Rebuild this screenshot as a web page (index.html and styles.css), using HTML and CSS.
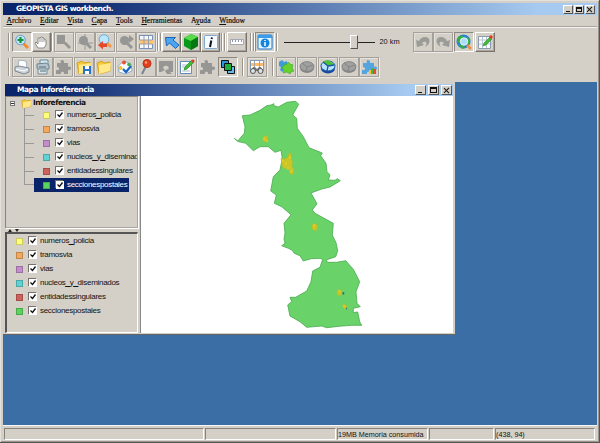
FILE: index.html
```html
<!DOCTYPE html>
<html lang="es">
<head>
<meta charset="utf-8">
<title>GEOPISTA GIS workbench.</title>
<link rel="stylesheet" href="styles.css">
</head>
<body>
<svg class="defs" aria-hidden="true">
  <defs>
    <symbol id="lens" viewBox="0 0 16 16"><path d="M9 9l5 5" stroke="currentColor" stroke-width="3"/><circle cx="6.5" cy="6.5" r="4.5" fill="currentColor"/></symbol>
    <symbol id="puzzle" viewBox="0 0 16 16"><path fill="currentColor" d="M2 4h4c-2-4 4-4 3 0h4v4c4-2 4 4 0 3v4H9c1-3-4-3-3 0H1v-4c4 1 4-3 1-3z"/></symbol>
    <symbol id="disc" viewBox="0 0 16 16"><ellipse cx="8" cy="9" rx="7" ry="5" fill="#858585"/><ellipse cx="8" cy="7.5" rx="7" ry="4.8" fill="#a0a0a0" stroke="#858585"/><path d="M8 8L3 4M8 8l6-2M8 8l-1 4" stroke="#858585"/></symbol>
    <symbol id="folder" viewBox="0 0 16 16"><path d="M1 4l5-2 2 2 6-1v9L3 15z" fill="#f4c83c" stroke="#d9a21f"/><path d="M3 6l12-2-1 8-11 3z" fill="#ffe98a"/></symbol>
    <symbol id="sheet" viewBox="0 0 16 16"><path d="M1.500 2.500h12v12h-12z" fill="#fff" stroke="#8b9bb0"/><path d="M2 6h11M2 10h11M5.500 3v11M9.500 3v11" stroke="#b5c2d2"/><path d="M6 12l1-3 6-6 2 2-6 6z" fill="#43bb36" stroke="#278f22" stroke-width=".6"/><circle cx="14" cy="3" r="1.700" fill="#e23a22"/></symbol>
    <symbol id="undo" viewBox="0 0 16 16"><path d="M1 6l1 7 7-2-2-2c4-3 6 0 3 4 6-3 6-10 0-10-3 0-5 2-6 4z" fill="#9b9b98"/></symbol>
    <symbol id="tick" viewBox="0 0 8 8"><path d="M1.500 3.500l2 2 3-4" fill="none" stroke="#111" stroke-width="1.300"/></symbol>
  </defs>
</svg>

<div class="window">
  <header class="titlebar main-title">
    <h1 class="title">GEOPISTA GIS workbench.</h1>
    <div class="controls"><i class="ctl min"></i><i class="ctl max"></i><i class="ctl close"></i></div>
  </header>

  <nav class="menu">
    <span><u>A</u>rchivo</span><span><u>E</u>ditar</span><span><u>V</u>ista</span><span><u>C</u>apa</span><span><u>T</u>ools</span><span><u>H</u>erramientas</span><span>A<u>y</u>uda</span><span><u>W</u>indow</span>
  </nav>

  <div class="toolbar first">
    <i class="grip"></i>
    <div class="group zooming">
      <b class="btn on"><svg viewBox="0 0 16 16"><path d="M9 9l5 5" stroke="#f08b35" stroke-width="3"/><circle cx="6.500" cy="6" r="4.800" fill="#bfe5fb" stroke="#6c9dc4"/><path d="M6.500 3v6M3.500 6h6" stroke="#17943a" stroke-width="2.200"/></svg></b>
      <b class="btn up"><svg viewBox="0 0 16 16"><path d="M5 14L2 9l1-1 2 2V4h2l1-1h1l1 1h1v1l2 1v5l-2 3z" fill="#fff" stroke="#8a8a88"/><path d="M7 4v4M9 4v4M11 5v3" stroke="#999"/></svg></b>
    </div>
    <i class="grip"></i>
    <div class="group views">
      <b class="btn off"><svg viewBox="0 0 16 16"><path d="M1 1h8v7h1l5 5-2 2-5-5H1z" fill="currentColor"/></svg></b>
      <b class="btn off"><svg viewBox="0 0 16 16"><use href="#lens"/><path d="M8 0v16M1 9h15" stroke="currentColor"/></svg></b>
      <b class="btn"><svg viewBox="0 0 16 16"><path d="M9 8l5 5" stroke="#f29a4a" stroke-width="3"/><circle cx="7" cy="5.500" r="4.800" fill="#bce6fb" stroke="#6aa9d5"/><path d="M1 11l5-4v2.500h4v3.500H6v2.500z" fill="#e8482a"/></svg></b>
      <b class="btn off"><svg viewBox="0 0 16 16"><use href="#lens"/><path d="M8 4h3V1l5 4-5 4V7H8z" fill="currentColor"/></svg></b>
      <b class="btn"><svg viewBox="0 0 16 16"><path d="M1.500 1.500h13v13h-13z" fill="#f4f7fb" stroke="#7392bd"/><path d="M1 6h14v4H1z" fill="#ffc46b"/><path d="M2 6h12M2 10h12M6 2v12M10.500 2v12" stroke="#9a9ea9"/></svg></b>
    </div>
    <i class="grip double"></i>
    <div class="group tools">
      <b class="btn up"><svg viewBox="0 0 16 16"><path d="M1.500 3.500h10l-2.500 2.500 6 5-3.500 3.500-6-5.500-3 3z" fill="#4aa5f2" stroke="#1765bd"/></svg></b>
      <b class="btn up"><svg viewBox="0 0 16 16"><path d="M1 4l7-4 7 3v9l-7 4-7-4z" fill="#0b971a"/><path d="M1 4l7-4 7 3-7 4z" fill="#59dc4b"/><path d="M8 7l7-4v9l-7 4z" fill="#067811"/></svg></b>
      <b class="btn up"><svg viewBox="0 0 16 16"><rect x="1.500" y="1.500" width="13" height="13" rx="1" fill="#f4faff" stroke="#7fa9d0"/><path d="M9 3.500l-.5 1.500M8.300 6.500L7 13" stroke="#111" stroke-width="2"/></svg></b>
    </div>
    <i class="grip double"></i>
    <b class="btn up ruler"><svg viewBox="0 0 16 16"><path d="M1.500 5.500h13v5h-13z" fill="#fff" stroke="#a5a9b2"/><path d="M3.500 6v2M6.500 6v2M9.500 6v2M12.500 6v2" stroke="#8d94a5"/></svg></b>
    <i class="grip double"></i>
    <b class="btn on info"><svg viewBox="0 0 16 16"><rect x="1" y="1" width="14" height="14" rx="1" fill="#e5f4ff" stroke="#1c79cc"/><path d="M1 1h14v3H1z" fill="#3a9dec"/><circle cx="8" cy="9" r="4.500" fill="#1684dc"/><path d="M8 6v1M8 8v4" stroke="#fff" stroke-width="1.500"/></svg></b>
    <i class="grip"></i>
    <div class="scale"><div class="slider"><i class="thumb"></i></div><span>20 km</span></div>
    <div class="group history">
      <b class="btn off"><svg viewBox="0 0 16 16"><use href="#undo"/></svg></b>
      <b class="btn off"><svg class="flip" viewBox="0 0 16 16"><use href="#undo"/></svg></b>
      <b class="btn on"><svg viewBox="0 0 16 16"><circle cx="7.500" cy="7.500" r="7" fill="#2a82d6"/><path d="M2 3l4-2 2 3-3 4-4 1zM11 2l3 4-1 5-3-3zM3 11l4-1 2 4-3 1z" fill="#35ad43"/><circle cx="8" cy="7.500" r="3.700" fill="#a9def7" stroke="#e7f8ff"/><path d="M11 11l4 4" stroke="#f28b3e" stroke-width="2.500"/></svg></b>
      <b class="btn up"><svg viewBox="0 0 16 16"><use href="#sheet"/></svg></b>
    </div>
  </div>

  <div class="toolbar second">
    <i class="grip"></i>
    <div class="group files">
      <b class="btn"><svg viewBox="0 0 16 16"><path d="M4 8l1-7 7 1 1 7z" fill="#fff" stroke="#a4b2c1"/><path d="M1 8l4-1 10 2v4l-5 2-9-3z" fill="#cbd3d8" stroke="#7f8b93"/><path d="M2 10l8 2 4-2" fill="none" stroke="#fff"/></svg></b>
      <b class="btn"><svg viewBox="0 0 16 16"><path d="M5 1h8v5H5z" fill="#d9e8ef" stroke="#698c9b"/><path d="M2 5l9-1 3 2v4l-9 1-3-2z" fill="#b5c4cc" stroke="#6c8390"/><path d="M3 10h9v5H3z" fill="#dce4e8" stroke="#788c98"/><path d="M4 8h7M5 12h6" stroke="#4e707f"/></svg></b>
      <b class="btn off"><svg viewBox="0 0 16 16"><use href="#puzzle"/></svg></b>
      <b class="btn"><svg viewBox="0 0 16 16"><use href="#folder"/><path d="M7 7h8v8H7z" fill="#2c72cb"/><path d="M9 7h4v3H9zM9 12h4v3H9z" fill="#fff"/></svg></b>
      <b class="btn"><svg viewBox="0 0 16 16"><use href="#folder"/></svg></b>
      <b class="btn"><svg viewBox="0 0 16 16"><path d="M1 7l6-5 7 3 1 7-7 3-6-2z" fill="#f5faff" stroke="#90add0"/><circle cx="7" cy="3.500" r="2" fill="#e6562e"/><circle cx="3.500" cy="9" r="2" fill="#f5bd30"/><circle cx="12" cy="5.500" r="1.800" fill="#43ad43"/><path d="M6 10l3 3 5-6" fill="none" stroke="#1b63bc" stroke-width="2.200"/></svg></b>
      <b class="btn"><svg viewBox="0 0 16 16"><path d="M8 7l-4 8" stroke="#758492" stroke-width="2"/><circle cx="9" cy="4.500" r="4" fill="#e23f20" stroke="#b92e15"/><circle cx="8" cy="3.500" r="1.200" fill="#ff9f82"/></svg></b>
      <b class="btn off"><svg viewBox="0 0 16 16"><path d="M1 2h14v11h-3l2 2H9l-2-3 2-2 1 1c3-4-4-6-5-2l2 2-4 2H1z" fill="currentColor"/></svg></b>
      <b class="btn"><svg viewBox="0 0 16 16"><path d="M1.500 2.500h11v12h-11z" fill="#fff" stroke="#638cb9"/><path d="M3 6h5M3 8h4M3 12h8" stroke="#a7bad0"/><path d="M5 11l1-3 7-7 2 2-7 7z" fill="#43bd39" stroke="#218d21" stroke-width=".7"/><circle cx="14" cy="2" r="1.500" fill="#e13d25"/></svg></b>
      <b class="btn off flat"><svg viewBox="0 0 16 16"><use href="#puzzle"/></svg></b>
      <b class="btn on"><svg viewBox="0 0 16 16"><path d="M1.500 1.500h7v7h-7z" fill="#3090d8" stroke="#111"/><path d="M7.500 7.500h7v7h-7z" fill="#68b9ef" stroke="#111"/><path d="M4.500 4.500h7v7h-7z" fill="#20ae3b" stroke="#111"/></svg></b>
    </div>
    <i class="grip"></i>
    <b class="btn find"><svg viewBox="0 0 16 16"><path d="M1.500 1.500h13v10h-13z" fill="#fff" stroke="#8498b2"/><path d="M2 4h12v3H2z" fill="#ffb968"/><path d="M5.500 2v8M10.500 2v8" stroke="#9ea4ab"/><path d="M2 12l2-4h2l2 2 2-2h2l2 4" fill="#777"/><circle cx="4" cy="12" r="2.500" fill="#d8e1e7" stroke="#555"/><circle cx="11.500" cy="12" r="2.500" fill="#d8e1e7" stroke="#555"/></svg></b>
    <i class="grip"></i>
    <div class="group plugins">
      <b class="btn"><svg viewBox="0 0 16 16"><path d="M1 3l3-2 2 2 3-1v4l2 1-2 2v3l-3-1-2 2-2-2 1-3-2-1z" fill="#3e9dd9"/><path d="M6 6l3-1 1-2 2 2 3 1-1 3 2 3-3 1-1 2-3-2-4 1 1-3-2-2z" fill="#67d12e" stroke="#36a322" stroke-width=".6"/></svg></b>
      <b class="btn off"><svg viewBox="0 0 16 16"><use href="#disc"/></svg></b>
      <b class="btn"><svg viewBox="0 0 16 16"><ellipse cx="8" cy="9.500" rx="7" ry="5" fill="#174a9c"/><ellipse cx="8" cy="7" rx="7" ry="5" fill="#b9e3fa" stroke="#1857ad"/><path d="M8 7L3 3c3-3 9-1 11 3z" fill="#4bc42e"/><path d="M8 7L3 3M8 7l6-1M8 7l-1 5" stroke="#1756ab" stroke-width="1.300"/></svg></b>
      <b class="btn off"><svg viewBox="0 0 16 16"><use href="#disc"/></svg></b>
      <b class="btn"><svg class="blue" viewBox="0 0 16 16"><use href="#puzzle"/><path d="M8 15v-4h2v4z" fill="#f7c332"/><path d="M10 15V9h2v6z" fill="#44b843"/><path d="M12 15v-5h3v5z" fill="#ea4c2b"/></svg></b>
    </div>
  </div>

  <main class="desktop">
    <section class="frame">
      <header class="titlebar frame-title">
        <h2 class="title">Mapa Inforeferencia</h2>
        <div class="controls"><i class="ctl min"></i><i class="ctl max"></i><i class="ctl close"></i></div>
      </header>
      <div class="content">
        <aside class="side">
          <div class="tree">
            <div class="root"><i class="expander"></i><svg class="folder-icon" viewBox="0 0 16 16"><use href="#folder"/></svg><b>Inforeferencia</b></div>
            <ul class="layers">
              <li><i class="swatch yellow"></i><svg class="check"><use href="#tick"/></svg><span>numeros<span class="low">_</span>policia</span></li>
              <li><i class="swatch orange"></i><svg class="check"><use href="#tick"/></svg><span>tramosvia</span></li>
              <li><i class="swatch purple"></i><svg class="check"><use href="#tick"/></svg><span>vias</span></li>
              <li><i class="swatch cyan"></i><svg class="check"><use href="#tick"/></svg><span>nucleos<span class="low">_</span>y<span class="low">_</span>diseminad</span></li>
              <li><i class="swatch red"></i><svg class="check"><use href="#tick"/></svg><span>entidadessingulares</span></li>
              <li class="selected"><i class="swatch green"></i><svg class="check"><use href="#tick"/></svg><span>seccionespostales</span></li>
            </ul>
          </div>
          <div class="divider"><i class="arrow up-arrow"></i><i class="arrow down-arrow"></i></div>
          <ul class="layers legend">
            <li><i class="swatch yellow"></i><svg class="check"><use href="#tick"/></svg><span>numeros<span class="low">_</span>policia</span></li>
            <li><i class="swatch orange"></i><svg class="check"><use href="#tick"/></svg><span>tramosvia</span></li>
            <li><i class="swatch purple"></i><svg class="check"><use href="#tick"/></svg><span>vias</span></li>
            <li><i class="swatch cyan"></i><svg class="check"><use href="#tick"/></svg><span>nucleos<span class="low">_</span>y<span class="low">_</span>diseminados</span></li>
            <li><i class="swatch red"></i><svg class="check"><use href="#tick"/></svg><span>entidadessingulares</span></li>
            <li><i class="swatch green"></i><svg class="check"><use href="#tick"/></svg><span>seccionespostales</span></li>
          </ul>
        </aside>
        <svg class="map" viewBox="141 96 312 237">
          <path class="land" d="M234.300 138.300L237.700 141 244.300 133.300 245 126.700 242.300 115.700 250 115 260 110.300 266.700 105.700 271 105 274 103.700 273.500 105.500 278.300 107 286.700 102.300 295.700 101.300 298.700 104.300 292.700 115 296.700 118.300 297.300 128.300 303.300 136.700 309 147.700 322.300 153 320.700 155.700 326 163.300 327 171.700 330 175 328.300 180 335 180.300 337.300 178.700 340.300 180.700 330 187 321.700 189 311 193 317 203.700 312.300 210 315 213.300 333.300 223.300 332.300 235 336 242.700 337.700 250.700 335.700 256.700 326 260 327.700 262.300 336.700 262.300 345.700 260.700 353.300 269.300 359.700 281.700 356 291.700 357 303.300 360.300 306.700 353.300 308.300 353.300 312.700 357.700 312 359.700 321.700 361.700 325.300 351.700 325.300 339 326.300 326.700 327.700 321.700 326 306.700 327.300 300 321.700 290 316 287.700 305 291.700 301.700 290 297.300 295.700 297.300 306.700 291 311 281.700 312.700 271 320 267.300 322.700 259.300 320 258.300 311 258.700 303.300 261 300 255.700 294.300 253.300 292 250 288.300 248.300 281.700 245.700 285 243.300 284 239 285 233 284 223.300 291 214.700 281.700 206.700 274.300 203.300 276.300 195 270.700 191 273.300 176.700 280 170 282.300 158.300 281 150.300 275 152.300 268.300 146.700 260 146.700 253.300 150.700 245.700 143.300 238 141.500z"/>
          <g class="dots">
            <path d="M263 137l3-1.500 1.500 1 .5 5-4 .5-1-2z"/>
            <path d="M281 158l4 1 3-2 1-4 2 .5v5l1.500 3-.5 5 2 3-1 5-3-1-1-5-4 .500-3-3z"/>
            <path d="M312 225l2.500-1.500 3 1.500-.5 4.500-3 1.500-2-3z"/>
            <path d="M337 291l3-1.500 2 1.500-.5 4-4 .5z"/>
            <path d="M342.500 305l2-.5 2 1 .5 3-3 .5z"/>
          </g>
          <g class="speckles">
            <path d="M283 160v2M286 162v3M290 156v3M288 167v3M291 170v3M264 138v2M267 140v2M314 224v3M339 290v2M344 305v2"/>
          </g>
          <path class="marks" d="M342.500 293h1v1.500M346 308.500h1"/>
        </svg>
      </div>
    </section>
  </main>

  <footer class="status"><div></div><div></div><div>19MB Memoria consumida</div><div></div><div>(438, 94)</div></footer>
</div>
</body>
</html>
```
FILE: styles.css
```css
* { box-sizing: border-box; }
html, body { margin: 0; width: 600px; height: 443px; overflow: hidden; }
body { background: #d4d0c8; color: #111; font: 7.4px/10px "Liberation Sans", sans-serif; }
.defs { position: absolute; width: 0; height: 0; }
h1, h2, ul { margin: 0; padding: 0; }
li { list-style: none; }
.window {
  display: flex; flex-direction: column; height: 443px;
  padding: 3px 2px 2px 3px;
  border: solid; border-width: 0 1px 1px 0; border-color: #555;
  box-shadow: inset 1px 1px #e4e1dc, inset -1px -1px #999690;
}

/* Title bars */
.titlebar { display: flex; align-items: center; flex: none; color: #fff; background: linear-gradient(90deg, #0a246a, #0b286e 12%, #a6caf0 90%); }
.main-title { height: 12px; padding: 0 2px 0 13px; }
.frame-title { height: 12px; padding: 0 1px 0 12px; }
.title { font: bold 7.5px/12px "DejaVu Sans", sans-serif; letter-spacing: -.58px; white-space: nowrap; }
.frame-title .title { letter-spacing: -.45px; }
.controls { display: flex; margin-left: auto; }
.ctl { position: relative; width: 10px; height: 9px; background: #d4d0c8; border: 1px solid; border-color: #fff #555 #555 #fff; }
.ctl + .ctl { margin-left: 1px; }
.frame-title .ctl { width: 11px; height: 10px; }
.frame-title .ctl + .ctl { margin-left: 2px; }
.ctl::before, .ctl::after { content: ""; position: absolute; }
.min::before { left: 2px; bottom: 1px; width: 4px; height: 1px; background: #111; }
.max::before { inset: 1px; border: 1px solid #111; border-top-width: 2px; }
.close::before, .close::after { left: calc(50% - .6px); top: calc(50% - 3.500px); width: 1.200px; height: 7px; background: #111; transform: rotate(45deg); }
.close::after { transform: rotate(-45deg); }

/* Menu */
.menu { display: flex; flex: none; height: 12px; padding-left: 3.500px; gap: 8.700px; border-bottom: 1px solid #aaa69f; box-shadow: 0 1px #f4f2ee; font: 7.600px/12px "Liberation Serif", serif; -webkit-text-stroke: .2px #111; }
.menu u { text-decoration-thickness: 1px; text-underline-offset: 1px; }

/* Toolbars */
.toolbar { display: flex; align-items: center; flex: none; }
.first { padding: 0 0 0 5px; height: 30px; }
.second { padding: 0 0 5px 5px; height: 25px; }
.group { display: flex; }
.grip { flex: none; width: 2px; height: 18px; border-left: 1px solid #99958d; border-right: 1px solid #fff; }
.grip.double { width: 4px; border-right: 1px solid #99958d; box-shadow: inset 1px 0 #fff, 1px 0 #fff; }
.btn { display: grid; place-items: center; flex: none; width: 20px; height: 20px; border: 1px solid #a5a19a; box-shadow: inset 1px 1px #e4e1db, 1px 1px #eeece8; }
.btn svg { display: block; width: 16px; height: 16px; fill: none; }
.btn.off { color: #969694; }
.btn.on { border-color: #8d8982 #fff #fff #8d8982; box-shadow: none; }
.btn.up { border-color: #fff #77736c #77736c #fff; box-shadow: inset -1px -1px #aaa69f; }
.btn.flat { border-color: transparent; box-shadow: none; }
.flip { transform: scaleX(-1); }
.blue { color: #54a4df; }
.zooming { margin: 0 0 0 2px; }
.zooming .btn { width: 19.500px; }
.views { gap: .6px; margin: 0 1px; }
.tools { margin: 0 1px 0 .6px; }
.tools .btn { width: 19.500px; }
.ruler { margin: 0 3px 0 2px; }
.info { margin: 0 1px; }
.scale { display: flex; align-items: center; gap: 4px; margin-left: 6px; }
.slider { width: 91px; height: 14px; display: flex; align-items: center; background: linear-gradient(#222, #222) 0 50% / 100% 1px no-repeat; }
.thumb { width: 8px; height: 14px; margin-left: 66px; background: #d4d0c8; border: 1px solid; border-color: #fff #555 #555 #fff; }
.history { gap: .8px; margin-left: auto; margin-right: 102px; }
.files { gap: .6px; margin: 0 4px 0 2px; }
.find { margin: 0 5px 0 3px; }
.plugins { gap: .7px; margin-left: 2.500px; }

/* Desktop and map window */
.desktop { flex: 1; min-height: 0; background: #3a6ea5; }
.frame { width: 453px; height: 253px; padding: 2px; background: #d4d0c8; border: solid #666; border-width: 0 1px 1px 0; }
.content { display: flex; height: 237px; }
.side { display: flex; flex-direction: column; width: 136px; padding-right: 2px; border-right: 1px solid #888; flex: none; }
.tree { height: 132px; padding: 1px 0 0 4px; border: 1px solid; border-color: #88847d #aaa69f #aaa69f #88847d; box-shadow: 1px 1px #fff; overflow: hidden; }
.root { display: flex; align-items: center; height: 10px; font: bold 7.500px/10px "DejaVu Sans", sans-serif; letter-spacing: -.53px; }
.expander { width: 5px; height: 5px; border: 1px solid #777; background: linear-gradient(#333, #333) 50% 50% / 3px 1px no-repeat #fff; }
.folder-icon { width: 11px; height: 11px; margin: 0 1px 0 6px; }
.layers { font-size: 8px; letter-spacing: -.29px; }
.layers .low { -webkit-text-stroke: .5px currentColor; }
.layers li { position: relative; display: flex; align-items: center; height: 14px; white-space: nowrap; }
.tree .layers { margin-left: 14px; }
.tree li { padding-left: 19px; }
.tree li::before { content: ""; position: absolute; left: 0; top: 0; width: 9px; height: 100%; border-left: 1px solid #999; background: linear-gradient(#999, #999) 0 50% / 100% 1px no-repeat; }
.tree li.selected::before { left: -10px; height: 50%; background-position: 0 100%; }
.tree li.selected { margin-left: 10px; padding-left: 9px; width: 95px; color: #fff; background: #0a246a; }
.swatch { width: 7px; height: 7px; flex: none; margin-right: 6px; border: 1px solid #0003; }
.yellow { background: #ffff78; } .orange { background: #f4a85c; } .purple { background: #c28ccd; }
.cyan { background: #5ed3d3; } .red { background: #cf615c; } .green { background: #5bd35d; }
.check { width: 8px; height: 8px; flex: none; background: #fff; box-shadow: -1px -1px #77736c; margin-right: 3px; }
.divider { height: 4px; display: flex; align-items: center; gap: 3px; padding-left: 3px; flex: none; }
.arrow { width: 0; height: 0; border: solid transparent; border-width: 0 2px; }
.up-arrow { border-bottom: 3px solid #222; } .down-arrow { border-top: 3px solid #222; }
.legend { flex: 1; padding: 0 0 0 9px; border: 1px solid; border-color: #555 #fff #fff #555; border-top-width: 2px; border-left-width: 2px; }
.map { display: block; flex: none; width: 312px; height: 237px; background: #fff; }
.land { fill: #69d369; stroke: #47aa4c; stroke-width: .8; stroke-linejoin: round; }
.dots { fill: #c9c626; stroke: #b3b82b; stroke-width: .5; }
.speckles { stroke: #f2cf36; }
.marks { fill: none; stroke: #25638c; stroke-width: 1.500; }

/* Status bar */
.status { display: grid; grid-template-columns: 200px 131px 91px 65px 1fr; column-gap: 1px; flex: none; height: 15px; padding: 2px 2px 1px 1px; border-top: 1px solid #f8f7f5; font-size: 7.200px; }
.status div { height: 12px; line-height: 11px; white-space: nowrap; border: 1px solid; border-color: #87837c #fff #fff #87837c; }
```
